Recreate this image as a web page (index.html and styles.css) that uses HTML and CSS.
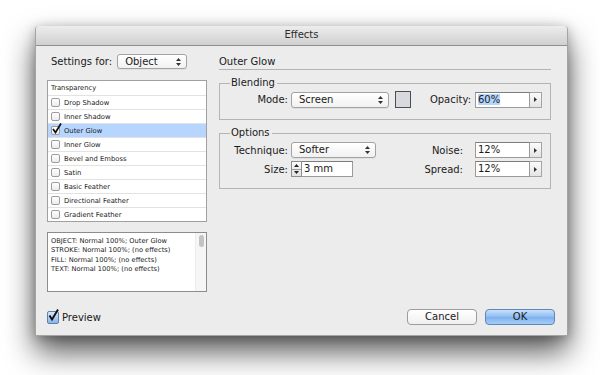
FILE: index.html
```html
<!DOCTYPE html>
<html lang="en">
<head>
<meta charset="UTF-8">
<title>Effects</title>
<link rel="stylesheet" href="styles.css">
</head>
<body>
<div class="stage">
<div class="window">
    <div class="titleBar">Effects</div>

    <div class="content">
        <div class="leftCol">
            <div class="settingsRow">
                <span class="settingsLabel">Settings for:</span>
                <div class="popup objectPopup">Object
                    <svg class="popArrows" width="5" height="8" viewBox="0 0 5 8"><path d="M2.5 0 L5 3 L0 3 Z M0 5 L5 5 L2.5 8 Z" fill="#333"/></svg>
                </div>
            </div>

            <div class="effectList">
                <div class="effectRow header">Transparency</div>
                <div class="effectRow"><span class="check"></span>Drop Shadow</div>
                <div class="effectRow"><span class="check"></span>Inner Shadow</div>
                <div class="effectRow selected"><span class="check">
                    <svg class="tick" width="10" height="11" viewBox="0 0 10 11"><path d="M1 6 L3.5 9.5 L9 0.5" fill="none" stroke="#111" stroke-width="1.7"/></svg>
                </span>Outer Glow</div>
                <div class="effectRow"><span class="check"></span>Inner Glow</div>
                <div class="effectRow"><span class="check"></span>Bevel and Emboss</div>
                <div class="effectRow"><span class="check"></span>Satin</div>
                <div class="effectRow"><span class="check"></span>Basic Feather</div>
                <div class="effectRow"><span class="check"></span>Directional Feather</div>
                <div class="effectRow last"><span class="check"></span>Gradient Feather</div>
            </div>

            <div class="summary">
                <div class="summaryText">
                    <div>OBJECT: Normal 100%; Outer Glow</div>
                    <div>STROKE: Normal 100%; (no effects)</div>
                    <div>FILL: Normal 100%; (no effects)</div>
                    <div>TEXT: Normal 100%; (no effects)</div>
                </div>
                <div class="scrollTrack"><div class="scrollThumb"></div></div>
            </div>
        </div>

        <div class="rightCol">
            <div class="heading">Outer Glow</div>

            <fieldset class="group blending">
                <legend>Blending</legend>
                <div class="groupRow">
                    <div class="leftGroup">
                        <span class="fieldLabel">Mode:</span>
                        <div class="popup modePopup">Screen
                            <svg class="popArrows" width="5" height="8" viewBox="0 0 5 8"><path d="M2.5 0 L5 3 L0 3 Z M0 5 L5 5 L2.5 8 Z" fill="#333"/></svg>
                        </div>
                        <div class="swatch"></div>
                    </div>
                    <div class="rightGroup">
                        <span class="sideLabel opacityLabel">Opacity:</span>
                        <div class="field"><span class="selText">60%</span></div>
                        <div class="fieldArrow"><svg width="3" height="5" viewBox="0 0 3 5"><path d="M0 0 L3 2.5 L0 5 Z" fill="#333"/></svg></div>
                    </div>
                </div>
            </fieldset>

            <fieldset class="group options">
                <legend>Options</legend>
                <div class="groupRow">
                    <div class="leftGroup">
                        <span class="fieldLabel">Technique:</span>
                        <div class="popup techPopup">Softer
                            <svg class="popArrows" width="5" height="8" viewBox="0 0 5 8"><path d="M2.5 0 L5 3 L0 3 Z M0 5 L5 5 L2.5 8 Z" fill="#333"/></svg>
                        </div>
                    </div>
                    <div class="rightGroup">
                        <span class="sideLabel">Noise:</span>
                        <div class="field">12%</div>
                        <div class="fieldArrow"><svg width="3" height="5" viewBox="0 0 3 5"><path d="M0 0 L3 2.5 L0 5 Z" fill="#333"/></svg></div>
                    </div>
                </div>
                <div class="groupRow second">
                    <div class="leftGroup">
                        <span class="fieldLabel">Size:</span>
                        <div class="stepper">
                            <div class="stepHalf"><svg width="5" height="3" viewBox="0 0 5 3"><path d="M2.5 0 L5 3 L0 3 Z" fill="#222"/></svg></div>
                            <div class="stepHalf"><svg width="5" height="3" viewBox="0 0 5 3"><path d="M0 0 L5 0 L2.5 3 Z" fill="#222"/></svg></div>
                        </div>
                        <div class="field sizeField">3 mm</div>
                    </div>
                    <div class="rightGroup">
                        <span class="sideLabel">Spread:</span>
                        <div class="field">12%</div>
                        <div class="fieldArrow"><svg width="3" height="5" viewBox="0 0 3 5"><path d="M0 0 L3 2.5 L0 5 Z" fill="#333"/></svg></div>
                    </div>
                </div>
            </fieldset>
        </div>
    </div>

    <div class="footer">
        <label class="preview">
            <span class="previewBox">
                <svg class="tick" width="11" height="12" viewBox="0 0 11 12"><path d="M1.5 6.5 L4 10.5 L10 0.5" fill="none" stroke="#111" stroke-width="1.9"/></svg>
            </span>
            Preview
        </label>
        <div class="buttons">
            <div class="btn cancelBtn">Cancel</div>
            <div class="btn okBtn">OK</div>
        </div>
    </div>
</div>
</div>
</body>
</html>
```

FILE: styles.css
```css
body{
    margin: 0;
    background-color: white;
    font-family: "DejaVu Sans", sans-serif;
    font-size: 10px;
    color: #1a1a1a;
}
.stage{
    box-sizing: border-box;
    height: 375px;
    padding: 26px 0 0 35px;
    overflow: hidden;
}
.window{
    width: 531px;
    height: 309px;
    border: 1px solid #a4a4a4;
    border-top: 0;
    border-radius: 4px 4px 0 0;
    background-color: #ececec;
    box-shadow: 0 16px 30px rgba(0, 0, 0, 0.65), 0 2px 12px rgba(0, 0, 0, 0.25);
    display: flex;
    flex-direction: column;
}
.titleBar{
    height: 19px;
    line-height: 18px;
    text-align: center;
    color: #2c2c2c;
    border-radius: 4px 4px 0 0;
    border-bottom: 1px solid #8f8f8f;
    background: linear-gradient(#ededed, #d0d0d0);
}
.content{
    display: flex;
    align-items: flex-start;
    gap: 12px;
    padding: 8px 0 0 11px;
}

/* left column */
.leftCol{
    width: 160px;
    display: flex;
    flex-direction: column;
}
.settingsRow{
    display: flex;
    align-items: center;
    height: 15px;
}
.settingsLabel{
    margin: 0 5px 0 4px;
}
.popup{
    box-sizing: border-box;
    position: relative;
    height: 15px;
    line-height: 13px;
    padding-left: 7px;
    border: 1px solid #a2a2a2;
    border-radius: 3px;
    background: linear-gradient(#ffffff, #f1f1f1);
    box-shadow: 0 1px 0 rgba(0, 0, 0, 0.05);
}
.popArrows{
    position: absolute;
    right: 5px;
    top: 3px;
}
.objectPopup{
    width: 70px;
}
.effectList{
    margin-top: 11px;
    border: 1px solid #a0a0a0;
    background-color: white;
    font-size: 6.8px;
}
.effectRow{
    box-sizing: border-box;
    height: 14px;
    padding-left: 3px;
    display: flex;
    align-items: center;
    border-bottom: 1px solid #e2e2e2;
}
.effectRow.header{
    height: 15px;
}
.effectRow.last{
    height: 13px;
    border-bottom: 0;
}
.effectRow.selected{
    background-color: #b6d6ff;
}
.check{
    box-sizing: border-box;
    position: relative;
    width: 9px;
    height: 9px;
    margin-right: 4px;
    border: 1px solid #9c9c9c;
    border-radius: 2px;
    background: linear-gradient(#ffffff, #ececec);
}
.check .tick{
    position: absolute;
    left: 0;
    top: -4px;
}
.summary{
    margin-top: 10px;
    height: 58px;
    border: 1px solid #8c8c8c;
    background-color: white;
    display: flex;
    font-size: 6.7px;
    line-height: 9.4px;
}
.summaryText{
    flex: 1;
    padding: 4px 0 0 3px;
}
.scrollTrack{
    width: 10px;
    background-color: #f6f6f6;
    border-left: 1px solid #ececec;
}
.scrollThumb{
    width: 5px;
    height: 12px;
    margin: 2px 0 0 3px;
    border-radius: 3px;
    background-color: #c3c3c3;
}

/* right column */
.rightCol{
    width: 332px;
    display: flex;
    flex-direction: column;
}
.heading{
    height: 15px;
    line-height: 15px;
    border-bottom: 1px solid #b4b4b4;
}
.group{
    margin: 7px 0 0;
    padding: 2px 8px 11px 10px;
    border: 1px solid #b4b4b4;
    min-width: 0;
}
.group legend{
    padding: 0 2px 0 1px;
    line-height: 12px;
}
.options{
    margin-top: 7px;
    padding-top: 3px;
}
.groupRow{
    display: flex;
    justify-content: space-between;
    align-items: center;
    height: 17px;
}
.options .groupRow{
    height: 16px;
}
.groupRow.second{
    margin-top: 3px;
}
.leftGroup,
.rightGroup{
    display: flex;
    align-items: center;
}
.fieldLabel{
    width: 58px;
    margin-right: 3px;
    text-align: right;
}
.modePopup{
    width: 98px;
    height: 16px;
    line-height: 14px;
}
.techPopup{
    width: 85px;
    height: 16px;
    line-height: 14px;
}
.swatch{
    box-sizing: border-box;
    width: 16px;
    height: 17px;
    margin-left: 6px;
    border: 1px solid #4e4e4e;
    background-color: #d7d9df;
}
.sideLabel{
    margin-right: 12px;
}
.opacityLabel{
    margin-right: 4px;
}
.field{
    box-sizing: border-box;
    width: 55px;
    height: 16px;
    line-height: 14px;
    padding-left: 2px;
    border: 1px solid #9a9a9a;
    border-top-color: #7c7c7c;
    background-color: white;
}
.selText{
    background-color: #b4d5fd;
}
.fieldArrow{
    box-sizing: border-box;
    width: 12px;
    height: 16px;
    display: flex;
    align-items: center;
    justify-content: center;
    border: 1px solid #a4a4a4;
    border-left: 0;
    background: linear-gradient(#fbfbfb, #e4e4e4);
}
.stepper{
    box-sizing: border-box;
    width: 11px;
    height: 16px;
    display: flex;
    flex-direction: column;
    border: 1px solid #8e8e8e;
    background: linear-gradient(#fafafa, #e2e2e2);
}
.stepHalf{
    flex: 1;
    display: flex;
    align-items: center;
    justify-content: center;
}
.stepHalf:first-child{
    border-bottom: 1px solid #9a9a9a;
}
.sizeField{
    width: 51px;
    border-left: 0;
}

/* footer */
.footer{
    margin-top: auto;
    display: flex;
    justify-content: space-between;
    align-items: center;
    padding: 0 12px 10px 11px;
}
.preview{
    display: flex;
    align-items: center;
}
.previewBox{
    box-sizing: border-box;
    position: relative;
    width: 12px;
    height: 13px;
    margin-right: 3px;
    border: 1px solid #5d80ad;
    border-radius: 2px;
    background: linear-gradient(#d6e7fc, #86b4ea);
}
.previewBox .tick{
    position: absolute;
    left: 0;
    top: -3px;
}
.buttons{
    display: flex;
    gap: 8px;
}
.btn{
    box-sizing: border-box;
    width: 70px;
    height: 16px;
    line-height: 14px;
    text-align: center;
    border-radius: 4px;
}
.cancelBtn{
    border: 1px solid #9c9c9c;
    background: linear-gradient(#ffffff, #f0f0f0);
}
.okBtn{
    border: 1px solid #5f86bb;
    background: linear-gradient(#c9e0fb, #8cbcf1 50%, #7cb1ee 51%, #a6ccf6);
}
```
